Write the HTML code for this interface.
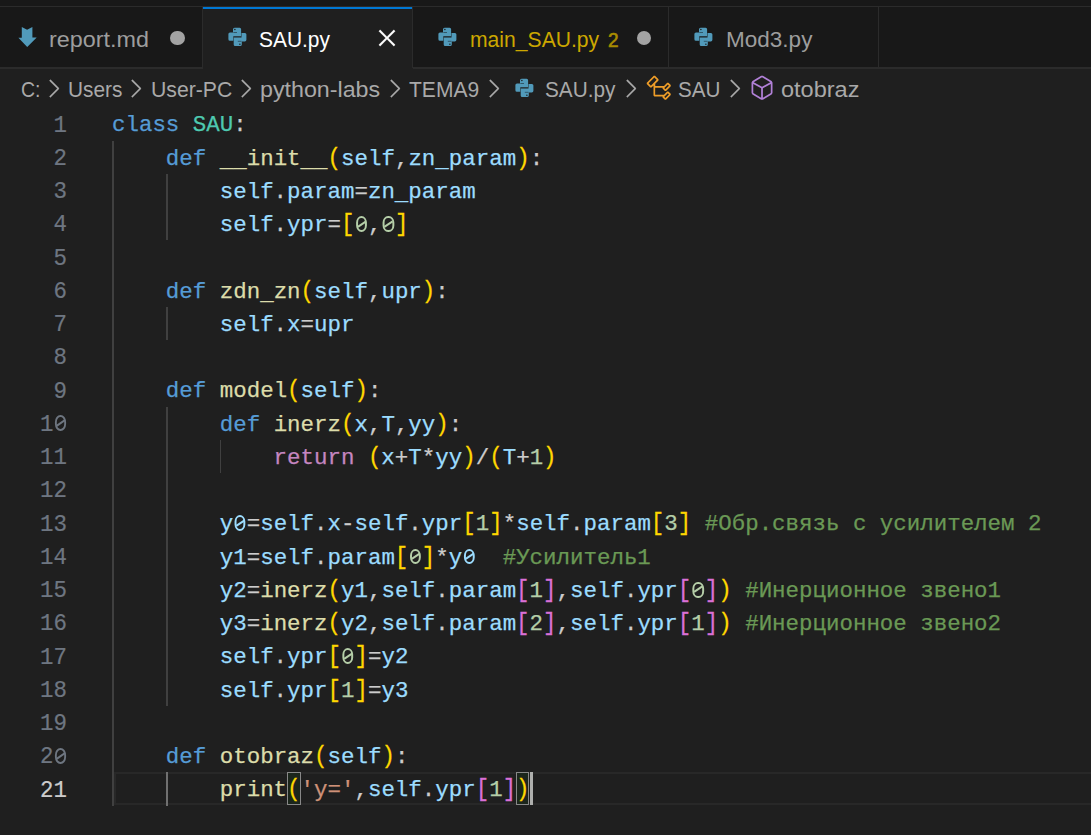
<!DOCTYPE html>
<html><head><meta charset="utf-8">
<style>
html,body{margin:0;padding:0;width:1091px;height:835px;overflow:hidden;background:#1F1F1F;}
body{position:relative;font-family:"Liberation Sans",sans-serif;}
.abs{position:absolute;}
#topbar{position:absolute;left:0;top:0;width:1091px;height:68px;background:#181818;}
#tline{position:absolute;left:0;top:6px;width:1091px;height:1px;background:#2B2B2B;}
#tbot{position:absolute;left:0;top:67px;width:1091px;height:2px;background:#2B2B2B;}
.tab{position:absolute;top:7px;height:60px;background:#181818;}
.tab.active{background:#1F1F1F;height:62px;}
.vdiv{position:absolute;top:7px;width:1.5px;height:61px;background:#2B2B2B;}
.tt{position:absolute;white-space:pre;font-size:22px;line-height:1;transform-origin:0 0;}
.bc{position:absolute;white-space:pre;font-size:22px;line-height:1;color:#A9A9A9;transform-origin:0 0;}
.ln{position:absolute;left:111.9px;height:33.25px;line-height:33.25px;white-space:pre;font-family:"Liberation Mono",monospace;font-size:22.9px;letter-spacing:0px;color:#CCCCCC;transform:scaleX(0.98035);transform-origin:0 0;-webkit-text-stroke:0.25px currentColor;}
.num{position:absolute;left:0.8px;width:66px;text-align:right;height:33.25px;line-height:33.25px;font-family:"Liberation Mono",monospace;font-size:24.2px;color:#6E7681;-webkit-text-stroke:0.2px currentColor;transform:scaleX(0.92769);transform-origin:100% 0;}
.num.act{color:#CCCCCC;}
.guide{position:absolute;width:1.75px;background:#404040;}
.guide.act{background:#707070;}
.z,.z2{position:relative;color:transparent;-webkit-text-stroke:0 transparent;}
.z::before,.z2::before{content:"";position:absolute;left:1.5px;top:4.2px;width:11.2px;height:15.6px;box-sizing:border-box;border:2.1px solid #B5CEA8;border-radius:50% / 42%;}
.z::after,.z2::after{content:"";position:absolute;left:2.4px;top:10.5px;width:10.4px;height:2.1px;background:#B5CEA8;transform:rotate(-33deg);}
.z2::before{border-color:#9CDCFE}.z2::after{background:#9CDCFE}
.nz{position:relative;color:transparent;-webkit-text-stroke:0 transparent;}
.nz::before{content:"";position:absolute;left:1.3px;top:4.2px;width:11.8px;height:16.4px;box-sizing:border-box;border:2px solid #6E7681;border-radius:50% / 42%;}
.nz::after{content:"";position:absolute;left:2.3px;top:11.2px;width:10.8px;height:2px;background:#6E7681;transform:rotate(-33deg);}
.br{display:inline-block;transform:translateY(-0.15px) scaleY(1.045);}
.us{position:relative;top:2px;}
</style></head><body>
<div id="topbar"></div>
<div id="tline"></div>
<div id="tbot"></div>
<div class="tab active" style="left:203px;width:209.5px"></div>
<div class="abs" style="left:203px;top:7px;width:209.5px;height:2px;background:#0078D4"></div>
<div class="vdiv" style="left:201.75px"></div>
<div class="vdiv" style="left:411.75px"></div>
<div class="vdiv" style="left:667.75px"></div>
<div class="vdiv" style="left:877.75px"></div>
<div class="tt" style="left:49.34px;top:29.00px;font-size:22px;color:#9D9D9D;transform:scaleX(1.0620);">report.md</div>
<div class="tt" style="left:258.65px;top:29.00px;font-size:22px;color:#FFFFFF;transform:scaleX(0.9514);">SAU.py</div>
<div class="tt" style="left:469.74px;top:29.00px;font-size:22px;color:#CCA700;transform:scaleX(0.9604);">main_SAU.py</div>
<div class="tt" style="left:607.85px;top:30.00px;font-size:20px;color:#A88C00;-webkit-text-stroke:0.6px currentColor;transform:scaleX(0.9500);">2</div>
<div class="tt" style="left:726.38px;top:29.00px;font-size:22px;color:#9D9D9D;transform:scaleX(1.0238);">Mod3.py</div>
<div class="bc" style="left:20.61px;top:78.70px;font-size:22px;color:#A9A9A9;transform:scaleX(0.8850);">C:</div>
<div class="bc" style="left:68.45px;top:78.70px;font-size:22px;color:#A9A9A9;transform:scaleX(0.9464);">Users</div>
<div class="bc" style="left:150.64px;top:78.70px;font-size:22px;color:#A9A9A9;transform:scaleX(0.9639);">User-PC</div>
<div class="bc" style="left:259.94px;top:78.70px;font-size:22px;color:#A9A9A9;transform:scaleX(1.0562);">python-labs</div>
<div class="bc" style="left:408.60px;top:78.70px;font-size:22px;color:#A9A9A9;transform:scaleX(0.9562);">TEMA9</div>
<div class="bc" style="left:545.36px;top:78.70px;font-size:22px;color:#A9A9A9;transform:scaleX(0.9446);">SAU.py</div>
<div class="bc" style="left:677.86px;top:78.70px;font-size:22px;color:#A9A9A9;transform:scaleX(0.9372);">SAU</div>
<div class="bc" style="left:780.73px;top:78.70px;font-size:22px;color:#A9A9A9;transform:scaleX(1.0694);">otobraz</div>
<div class="abs" style="left:114.3px;top:772.0px;width:977px;height:32.5px;box-sizing:border-box;border-top:2px solid #282828;border-bottom:2px solid #282828;border-left:2px solid #282828;"></div>
<div class="abs" style="left:287.01px;top:772.0px;width:13.97px;height:32.75px;box-sizing:border-box;border:1.5px solid #888888;background:#1C261C"></div>
<div class="abs" style="left:515.5px;top:772.0px;width:13.97px;height:32.75px;box-sizing:border-box;border:1.5px solid #888888;background:#1C261C"></div>
<div class="guide" style="left:111.90px;top:140.50px;height:665.00px"></div>
<div class="guide" style="left:165.78px;top:173.75px;height:66.50px"></div>
<div class="guide" style="left:165.78px;top:306.75px;height:33.25px"></div>
<div class="guide" style="left:165.78px;top:406.50px;height:299.25px"></div>
<div class="guide" style="left:219.66px;top:439.75px;height:33.25px"></div>
<div class="guide act" style="left:165.78px;top:772.25px;height:33.25px"></div>
<div class="num" style="top:108.65px">1</div>
<div class="num" style="top:141.90px">2</div>
<div class="num" style="top:175.15px">3</div>
<div class="num" style="top:208.40px">4</div>
<div class="num" style="top:241.65px">5</div>
<div class="num" style="top:274.90px">6</div>
<div class="num" style="top:308.15px">7</div>
<div class="num" style="top:341.40px">8</div>
<div class="num" style="top:374.65px">9</div>
<div class="num" style="top:407.90px">1<span class=nz>0</span></div>
<div class="num" style="top:441.15px">11</div>
<div class="num" style="top:474.40px">12</div>
<div class="num" style="top:507.65px">13</div>
<div class="num" style="top:540.90px">14</div>
<div class="num" style="top:574.15px">15</div>
<div class="num" style="top:607.40px">16</div>
<div class="num" style="top:640.65px">17</div>
<div class="num" style="top:673.90px">18</div>
<div class="num" style="top:707.15px">19</div>
<div class="num" style="top:740.40px">2<span class=nz>0</span></div>
<div class="num act" style="top:773.65px">21</div>
<div class="ln" style="top:109.25px"><span style="color:#569CD6">class</span><span style="color:#CCCCCC"> </span><span style="color:#4EC9B0">SAU</span><span style="color:#CCCCCC">:</span></div>
<div class="ln" style="top:142.50px"><span style="color:#CCCCCC">    </span><span style="color:#569CD6">def</span><span style="color:#CCCCCC"> </span><span style="color:#DCDCAA"><span class="us">_</span><span class="us">_</span>init<span class="us">_</span><span class="us">_</span></span><span style="color:#FFD700"><span class="br">(</span></span><span style="color:#9CDCFE">self</span><span style="color:#CCCCCC">,</span><span style="color:#9CDCFE">zn<span class="us">_</span>param</span><span style="color:#FFD700"><span class="br">)</span></span><span style="color:#CCCCCC">:</span></div>
<div class="ln" style="top:175.75px"><span style="color:#CCCCCC">        </span><span style="color:#9CDCFE">self</span><span style="color:#CCCCCC">.</span><span style="color:#9CDCFE">param</span><span style="color:#CCCCCC">=</span><span style="color:#9CDCFE">zn<span class="us">_</span>param</span></div>
<div class="ln" style="top:209.00px"><span style="color:#CCCCCC">        </span><span style="color:#9CDCFE">self</span><span style="color:#CCCCCC">.</span><span style="color:#9CDCFE">ypr</span><span style="color:#CCCCCC">=</span><span style="color:#FFD700"><span class="br">[</span></span><span class="z">0</span><span style="color:#CCCCCC">,</span><span class="z">0</span><span style="color:#FFD700"><span class="br">]</span></span></div>
<div class="ln" style="top:242.25px"></div>
<div class="ln" style="top:275.50px"><span style="color:#CCCCCC">    </span><span style="color:#569CD6">def</span><span style="color:#CCCCCC"> </span><span style="color:#DCDCAA">zdn<span class="us">_</span>zn</span><span style="color:#FFD700"><span class="br">(</span></span><span style="color:#9CDCFE">self</span><span style="color:#CCCCCC">,</span><span style="color:#9CDCFE">upr</span><span style="color:#FFD700"><span class="br">)</span></span><span style="color:#CCCCCC">:</span></div>
<div class="ln" style="top:308.75px"><span style="color:#CCCCCC">        </span><span style="color:#9CDCFE">self</span><span style="color:#CCCCCC">.</span><span style="color:#9CDCFE">x</span><span style="color:#CCCCCC">=</span><span style="color:#9CDCFE">upr</span></div>
<div class="ln" style="top:342.00px"></div>
<div class="ln" style="top:375.25px"><span style="color:#CCCCCC">    </span><span style="color:#569CD6">def</span><span style="color:#CCCCCC"> </span><span style="color:#DCDCAA">model</span><span style="color:#FFD700"><span class="br">(</span></span><span style="color:#9CDCFE">self</span><span style="color:#FFD700"><span class="br">)</span></span><span style="color:#CCCCCC">:</span></div>
<div class="ln" style="top:408.50px"><span style="color:#CCCCCC">        </span><span style="color:#569CD6">def</span><span style="color:#CCCCCC"> </span><span style="color:#DCDCAA">inerz</span><span style="color:#FFD700"><span class="br">(</span></span><span style="color:#9CDCFE">x</span><span style="color:#CCCCCC">,</span><span style="color:#9CDCFE">T</span><span style="color:#CCCCCC">,</span><span style="color:#9CDCFE">yy</span><span style="color:#FFD700"><span class="br">)</span></span><span style="color:#CCCCCC">:</span></div>
<div class="ln" style="top:441.75px"><span style="color:#CCCCCC">            </span><span style="color:#C586C0">return</span><span style="color:#CCCCCC"> </span><span style="color:#FFD700"><span class="br">(</span></span><span style="color:#9CDCFE">x</span><span style="color:#CCCCCC">+</span><span style="color:#9CDCFE">T</span><span style="color:#CCCCCC">*</span><span style="color:#9CDCFE">yy</span><span style="color:#FFD700"><span class="br">)</span></span><span style="color:#CCCCCC">/</span><span style="color:#FFD700"><span class="br">(</span></span><span style="color:#9CDCFE">T</span><span style="color:#CCCCCC">+</span><span style="color:#B5CEA8">1</span><span style="color:#FFD700"><span class="br">)</span></span></div>
<div class="ln" style="top:475.00px"></div>
<div class="ln" style="top:508.25px"><span style="color:#CCCCCC">        </span><span style="color:#9CDCFE">y<span class="z2">0</span></span><span style="color:#CCCCCC">=</span><span style="color:#9CDCFE">self</span><span style="color:#CCCCCC">.</span><span style="color:#9CDCFE">x</span><span style="color:#CCCCCC">-</span><span style="color:#9CDCFE">self</span><span style="color:#CCCCCC">.</span><span style="color:#9CDCFE">ypr</span><span style="color:#FFD700"><span class="br">[</span></span><span style="color:#B5CEA8">1</span><span style="color:#FFD700"><span class="br">]</span></span><span style="color:#CCCCCC">*</span><span style="color:#9CDCFE">self</span><span style="color:#CCCCCC">.</span><span style="color:#9CDCFE">param</span><span style="color:#FFD700"><span class="br">[</span></span><span style="color:#B5CEA8">3</span><span style="color:#FFD700"><span class="br">]</span></span><span style="color:#CCCCCC"> </span><span style="color:#6A9955">#Обр.связь с усилителем 2</span></div>
<div class="ln" style="top:541.50px"><span style="color:#CCCCCC">        </span><span style="color:#9CDCFE">y1</span><span style="color:#CCCCCC">=</span><span style="color:#9CDCFE">self</span><span style="color:#CCCCCC">.</span><span style="color:#9CDCFE">param</span><span style="color:#FFD700"><span class="br">[</span></span><span class="z">0</span><span style="color:#FFD700"><span class="br">]</span></span><span style="color:#CCCCCC">*</span><span style="color:#9CDCFE">y<span class="z2">0</span></span><span style="color:#CCCCCC">  </span><span style="color:#6A9955">#Усилитель1</span></div>
<div class="ln" style="top:574.75px"><span style="color:#CCCCCC">        </span><span style="color:#9CDCFE">y2</span><span style="color:#CCCCCC">=</span><span style="color:#DCDCAA">inerz</span><span style="color:#FFD700"><span class="br">(</span></span><span style="color:#9CDCFE">y1</span><span style="color:#CCCCCC">,</span><span style="color:#9CDCFE">self</span><span style="color:#CCCCCC">.</span><span style="color:#9CDCFE">param</span><span style="color:#DA70D6"><span class="br">[</span></span><span style="color:#B5CEA8">1</span><span style="color:#DA70D6"><span class="br">]</span></span><span style="color:#CCCCCC">,</span><span style="color:#9CDCFE">self</span><span style="color:#CCCCCC">.</span><span style="color:#9CDCFE">ypr</span><span style="color:#DA70D6"><span class="br">[</span></span><span class="z">0</span><span style="color:#DA70D6"><span class="br">]</span></span><span style="color:#FFD700"><span class="br">)</span></span><span style="color:#CCCCCC"> </span><span style="color:#6A9955">#Инерционное звено1</span></div>
<div class="ln" style="top:608.00px"><span style="color:#CCCCCC">        </span><span style="color:#9CDCFE">y3</span><span style="color:#CCCCCC">=</span><span style="color:#DCDCAA">inerz</span><span style="color:#FFD700"><span class="br">(</span></span><span style="color:#9CDCFE">y2</span><span style="color:#CCCCCC">,</span><span style="color:#9CDCFE">self</span><span style="color:#CCCCCC">.</span><span style="color:#9CDCFE">param</span><span style="color:#DA70D6"><span class="br">[</span></span><span style="color:#B5CEA8">2</span><span style="color:#DA70D6"><span class="br">]</span></span><span style="color:#CCCCCC">,</span><span style="color:#9CDCFE">self</span><span style="color:#CCCCCC">.</span><span style="color:#9CDCFE">ypr</span><span style="color:#DA70D6"><span class="br">[</span></span><span style="color:#B5CEA8">1</span><span style="color:#DA70D6"><span class="br">]</span></span><span style="color:#FFD700"><span class="br">)</span></span><span style="color:#CCCCCC"> </span><span style="color:#6A9955">#Инерционное звено2</span></div>
<div class="ln" style="top:641.25px"><span style="color:#CCCCCC">        </span><span style="color:#9CDCFE">self</span><span style="color:#CCCCCC">.</span><span style="color:#9CDCFE">ypr</span><span style="color:#FFD700"><span class="br">[</span></span><span class="z">0</span><span style="color:#FFD700"><span class="br">]</span></span><span style="color:#CCCCCC">=</span><span style="color:#9CDCFE">y2</span></div>
<div class="ln" style="top:674.50px"><span style="color:#CCCCCC">        </span><span style="color:#9CDCFE">self</span><span style="color:#CCCCCC">.</span><span style="color:#9CDCFE">ypr</span><span style="color:#FFD700"><span class="br">[</span></span><span style="color:#B5CEA8">1</span><span style="color:#FFD700"><span class="br">]</span></span><span style="color:#CCCCCC">=</span><span style="color:#9CDCFE">y3</span></div>
<div class="ln" style="top:707.75px"></div>
<div class="ln" style="top:741.00px"><span style="color:#CCCCCC">    </span><span style="color:#569CD6">def</span><span style="color:#CCCCCC"> </span><span style="color:#DCDCAA">otobraz</span><span style="color:#FFD700"><span class="br">(</span></span><span style="color:#9CDCFE">self</span><span style="color:#FFD700"><span class="br">)</span></span><span style="color:#CCCCCC">:</span></div>
<div class="ln" style="top:774.25px"><span style="color:#CCCCCC">        </span><span style="color:#DCDCAA">print</span><span style="color:#FFD700"><span class="br">(</span></span><span style="color:#CE9178">'y='</span><span style="color:#CCCCCC">,</span><span style="color:#9CDCFE">self</span><span style="color:#CCCCCC">.</span><span style="color:#9CDCFE">ypr</span><span style="color:#DA70D6"><span class="br">[</span></span><span style="color:#B5CEA8">1</span><span style="color:#DA70D6"><span class="br">]</span></span><span style="color:#FFD700"><span class="br">)</span></span></div>
<svg class="abs" style="left:224.00px;top:24.00px" width="28" height="26" viewBox="0 0 28 26"><path fill="#519ABA" d="M9 5.3Q9 3.7 10.6 3.7H15.6Q17.1 3.7 17.1 5.2V12.3H9.3V16.8H5.9Q4.4 16.8 4.4 15.2V10Q4.4 8.4 6 8.4H9Z"/><path fill="#519ABA" d="M17.8 20.5Q17.8 22.1 16.2 22.1H11.2Q9.7 22.1 9.7 20.6V13.5H17.5V9H20.9Q22.4 9 22.4 10.6V15.8Q22.4 17.4 20.8 17.4H17.8Z"/><path stroke="#1C2A33" stroke-width="0.6" d="M9.3 8.5H13M13.8 17.3H17.5"/><circle cx="10.9" cy="5.6" r="0.75" fill="#1C1C1C"/><circle cx="15.9" cy="20.2" r="0.75" fill="#1C1C1C"/></svg>
<svg class="abs" style="left:433.95px;top:24.00px" width="28" height="26" viewBox="0 0 28 26"><path fill="#519ABA" d="M9 5.3Q9 3.7 10.6 3.7H15.6Q17.1 3.7 17.1 5.2V12.3H9.3V16.8H5.9Q4.4 16.8 4.4 15.2V10Q4.4 8.4 6 8.4H9Z"/><path fill="#519ABA" d="M17.8 20.5Q17.8 22.1 16.2 22.1H11.2Q9.7 22.1 9.7 20.6V13.5H17.5V9H20.9Q22.4 9 22.4 10.6V15.8Q22.4 17.4 20.8 17.4H17.8Z"/><path stroke="#1C2A33" stroke-width="0.6" d="M9.3 8.5H13M13.8 17.3H17.5"/><circle cx="10.9" cy="5.6" r="0.75" fill="#1C1C1C"/><circle cx="15.9" cy="20.2" r="0.75" fill="#1C1C1C"/></svg>
<svg class="abs" style="left:690.30px;top:24.00px" width="28" height="26" viewBox="0 0 28 26"><path fill="#519ABA" d="M9 5.3Q9 3.7 10.6 3.7H15.6Q17.1 3.7 17.1 5.2V12.3H9.3V16.8H5.9Q4.4 16.8 4.4 15.2V10Q4.4 8.4 6 8.4H9Z"/><path fill="#519ABA" d="M17.8 20.5Q17.8 22.1 16.2 22.1H11.2Q9.7 22.1 9.7 20.6V13.5H17.5V9H20.9Q22.4 9 22.4 10.6V15.8Q22.4 17.4 20.8 17.4H17.8Z"/><path stroke="#1C2A33" stroke-width="0.6" d="M9.3 8.5H13M13.8 17.3H17.5"/><circle cx="10.9" cy="5.6" r="0.75" fill="#1C1C1C"/><circle cx="15.9" cy="20.2" r="0.75" fill="#1C1C1C"/></svg>
<svg class="abs" style="left:510.50px;top:74.75px" width="28" height="26" viewBox="0 0 28 26"><path fill="#519ABA" d="M9 5.3Q9 3.7 10.6 3.7H15.6Q17.1 3.7 17.1 5.2V12.3H9.3V16.8H5.9Q4.4 16.8 4.4 15.2V10Q4.4 8.4 6 8.4H9Z"/><path fill="#519ABA" d="M17.8 20.5Q17.8 22.1 16.2 22.1H11.2Q9.7 22.1 9.7 20.6V13.5H17.5V9H20.9Q22.4 9 22.4 10.6V15.8Q22.4 17.4 20.8 17.4H17.8Z"/><path stroke="#1C2A33" stroke-width="0.6" d="M9.3 8.5H13M13.8 17.3H17.5"/><circle cx="10.9" cy="5.6" r="0.75" fill="#1C1C1C"/><circle cx="15.9" cy="20.2" r="0.75" fill="#1C1C1C"/></svg>
<svg class="abs" style="left:14px;top:24px" width="28" height="26" viewBox="0 0 28 26"><path fill="#519ABA" d="M7.8 3L13.1 5.8L18.4 3V13.6H22.7L13.2 23L4.4 13.8H7.8Z"/></svg>
<div class="abs" style="left:170.25px;top:30.65px;width:14.5px;height:14.5px;border-radius:50%;background:#A3A3A3"></div>
<div class="abs" style="left:636.85px;top:30.75px;width:14.3px;height:14.3px;border-radius:50%;background:#A3A3A3"></div>
<svg class="abs" style="left:372.40px;top:22.90px" width="30" height="30" viewBox="0 0 16 16"><path fill="#FFFFFF" stroke="#FFFFFF" stroke-width="0.15" d="M8 8.707l3.646 3.647.708-.707L8.707 8l3.647-3.646-.707-.708L8 7.293 4.354 3.646l-.707.708L7.293 8l-3.646 3.646.707.708L8 8.707z"/></svg>
<svg class="abs" style="left:39.30px;top:73.67px" width="29" height="29" viewBox="0 0 16 16"><path fill="#A9A9A9" stroke="#A9A9A9" stroke-width="0.12" d="M10.072 8.024L5.715 3.667l.618-.62L11 7.716v.618L6.333 13l-.618-.619 4.357-4.357z"/></svg>
<svg class="abs" style="left:120.70px;top:73.67px" width="29" height="29" viewBox="0 0 16 16"><path fill="#A9A9A9" stroke="#A9A9A9" stroke-width="0.12" d="M10.072 8.024L5.715 3.667l.618-.62L11 7.716v.618L6.333 13l-.618-.619 4.357-4.357z"/></svg>
<svg class="abs" style="left:231.30px;top:73.67px" width="29" height="29" viewBox="0 0 16 16"><path fill="#A9A9A9" stroke="#A9A9A9" stroke-width="0.12" d="M10.072 8.024L5.715 3.667l.618-.62L11 7.716v.618L6.333 13l-.618-.619 4.357-4.357z"/></svg>
<svg class="abs" style="left:379.70px;top:73.67px" width="29" height="29" viewBox="0 0 16 16"><path fill="#A9A9A9" stroke="#A9A9A9" stroke-width="0.12" d="M10.072 8.024L5.715 3.667l.618-.62L11 7.716v.618L6.333 13l-.618-.619 4.357-4.357z"/></svg>
<svg class="abs" style="left:478.80px;top:73.67px" width="29" height="29" viewBox="0 0 16 16"><path fill="#A9A9A9" stroke="#A9A9A9" stroke-width="0.12" d="M10.072 8.024L5.715 3.667l.618-.62L11 7.716v.618L6.333 13l-.618-.619 4.357-4.357z"/></svg>
<svg class="abs" style="left:616.30px;top:73.67px" width="29" height="29" viewBox="0 0 16 16"><path fill="#A9A9A9" stroke="#A9A9A9" stroke-width="0.12" d="M10.072 8.024L5.715 3.667l.618-.62L11 7.716v.618L6.333 13l-.618-.619 4.357-4.357z"/></svg>
<svg class="abs" style="left:719.80px;top:73.67px" width="29" height="29" viewBox="0 0 16 16"><path fill="#A9A9A9" stroke="#A9A9A9" stroke-width="0.12" d="M10.072 8.024L5.715 3.667l.618-.62L11 7.716v.618L6.333 13l-.618-.619 4.357-4.357z"/></svg>
<svg class="abs" style="left:645.25px;top:74.05px" width="28" height="28" viewBox="0 0 16 16"><path fill="#EE9D28" d="M11.34 9.71h.71l2.67-2.67v-.71L13.38 5h-.7l-1.82 1.81h-5V5.560l1.86-1.850V3l-2-2H5L1 5v.71l2 2h.71l1.14-1.15v5.79l.5.5H10v.52l1.33 1.34h.71l2.67-2.67v-.71L13.37 10h-.7l-1.86 1.85h-5v-4H10v.48l1.34 1.38zm1.69-3.65l.63.63-2 2-.63-.63 2-2zm0 5l.63.63-2 2-.63-.63 2-2zM3.35 6.65l-1.29-1.3 3.29-3.29 1.3 1.29-3.3 3.3z"/></svg>
<svg class="abs" style="left:747.67px;top:74.15px" width="28" height="28" viewBox="0 0 16 16"><path fill="#B180D7" d="M13.51 4l-5-3h-1l-5 3-.49.86v6l.49.85 5 3h1l5-3 .49-.85v-6L13.51 4zm-6 9.56l-4.5-2.7V5.7l4.5 2.45v5.41zM3.27 4.7l4.740-2.840 4.740 2.840-4.740 2.590L3.27 4.7zm9.74 6.16l-4.5 2.7V8.15l4.5-2.45v5.16z"/></svg>
<div class="abs" style="left:529.77px;top:772.0px;width:3.5px;height:32.75px;background:#AEAFAD"></div>
</body></html>
